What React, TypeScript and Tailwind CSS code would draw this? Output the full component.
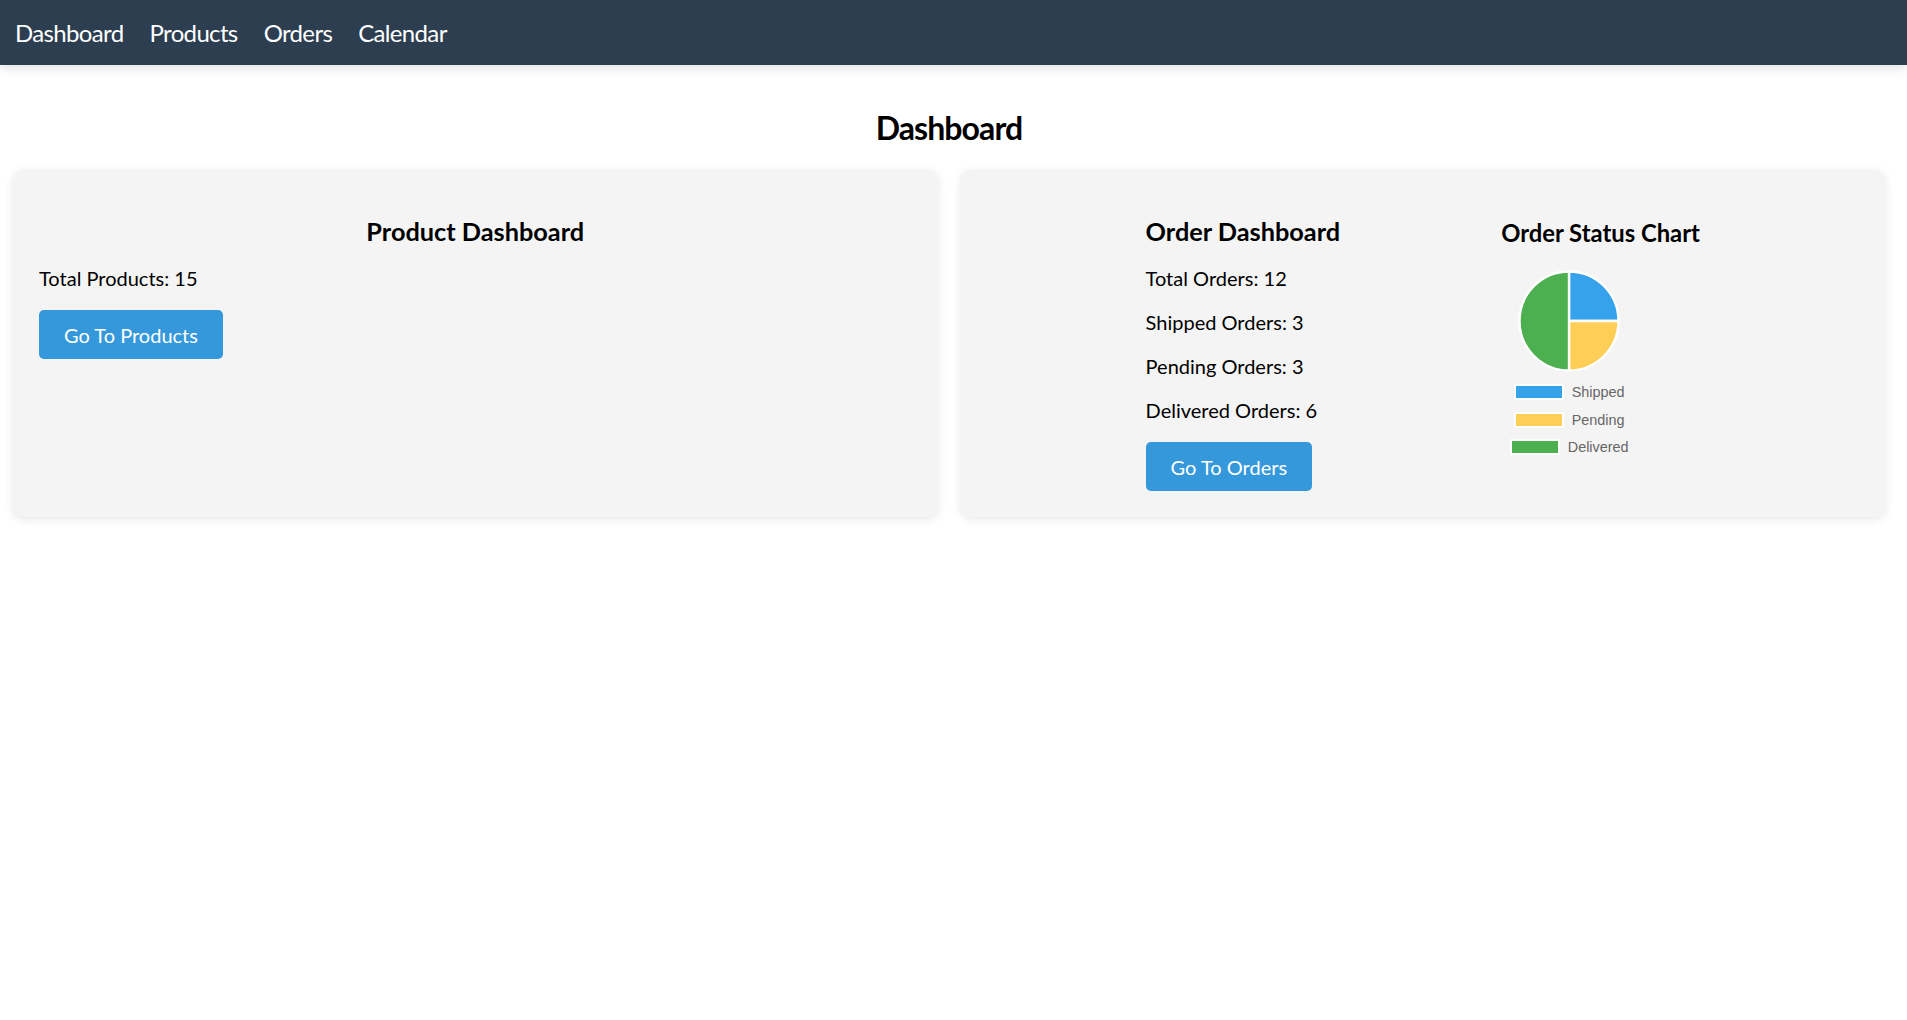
import React from 'react';

const navLinks = ['Dashboard', 'Products', 'Orders', 'Calendar'];

const orderStats = [
  { label: 'Total Orders', value: 12 },
  { label: 'Shipped Orders', value: 3 },
  { label: 'Pending Orders', value: 3 },
  { label: 'Delivered Orders', value: 6 },
];

const legend = [
  { label: 'Shipped', color: 'bg-[#36a2eb]' },
  { label: 'Pending', color: 'bg-[#ffce56]' },
  { label: 'Delivered', color: 'bg-[#4caf50]' },
];

const PieChart = () => (
  <svg width="136" height="104" viewBox="0 0 136 104" className="block">
    <g stroke="#ffffff" strokeWidth="2.4" strokeLinejoin="round">
      <path d="M68 52 L68 2.5 A49.5 49.5 0 0 1 117.5 52 Z" fill="#36a2eb" />
      <path d="M68 52 L117.5 52 A49.5 49.5 0 0 1 68 101.5 Z" fill="#ffce56" />
      <path d="M68 52 L68 101.5 A49.5 49.5 0 0 1 68 2.5 Z" fill="#4caf50" />
    </g>
  </svg>
);

const ActionButton = ({ children }: { children: React.ReactNode }) => (
  <button
    type="button"
    className="h-[49px] px-[25px] bg-[#3498db] text-white text-[20px] leading-[24px] rounded-[5px] cursor-pointer"
  >
    {children}
  </button>
);

export default function App() {
  return (
    <div className="min-h-screen bg-white text-black font-['Lato','Open_Sans',sans-serif]">
      <nav className="h-[65px] bg-[#2c3e50] flex items-center gap-[26px] pl-[15px] shadow-[0_3px_10px_rgba(0,0,0,0.12)]">
        {navLinks.map((link) => (
          <a key={link} href="#" className="text-white text-[24px] leading-[29px] tracking-[-0.65px]">
            {link}
          </a>
        ))}
      </nav>

      <main className="pl-[13px] pr-[22px]">
        <h1 className="mt-[44px] mb-[23px] text-center text-[32px] leading-[38px] font-bold tracking-[-0.9px]">
          Dashboard
        </h1>

        <div className="grid grid-cols-2 gap-[23px]">
          {/* products */}
          <section className="bg-[#f4f4f4] rounded-[10px] shadow-[0_2px_10px_rgba(0,0,0,0.1)] pt-[46px] pb-[26px] px-[26px]">
            <h2 className="text-center text-[25.3px] leading-[30px] font-bold mb-[20px]">Product Dashboard</h2>
            <p className="text-[20px] leading-[24px] mb-[20px]">Total Products: 15</p>
            <ActionButton>Go To Products</ActionButton>
          </section>

          {/* orders */}
          <section className="bg-[#f4f4f4] rounded-[10px] shadow-[0_2px_10px_rgba(0,0,0,0.1)] pt-[46px] pb-[26px] px-[26px] flex justify-center items-start gap-[161px]">
            <div className="flex flex-col items-start">
              <h2 className="text-[25.3px] leading-[30px] font-bold mb-[20px]">Order Dashboard</h2>
              {orderStats.map((s) => (
                <p key={s.label} className="text-[20px] leading-[24px] mb-[20px]">
                  {s.label}: {s.value}
                </p>
              ))}
              <ActionButton>Go To Orders</ActionButton>
            </div>

            <div className="flex flex-col mt-[3px]">
              <h3 className="text-[23.8px] leading-[28px] font-bold mb-[22px] whitespace-nowrap">Order Status Chart</h3>
              <div className="w-[136px]">
                <PieChart />
                <div className="mt-[11px] flex flex-col gap-[11.5px] font-['Liberation_Sans',Arial,sans-serif] text-[14.4px] text-[#666]">
                  {legend.map((l) => (
                    <div key={l.label} className="h-4 flex items-center justify-center gap-[8px]">
                      <span className={`w-[50px] h-[16px] border-2 border-white ${l.color}`} />
                      <span className="leading-4">{l.label}</span>
                    </div>
                  ))}
                </div>
              </div>
            </div>
          </section>
        </div>
      </main>
    </div>
  );
}
